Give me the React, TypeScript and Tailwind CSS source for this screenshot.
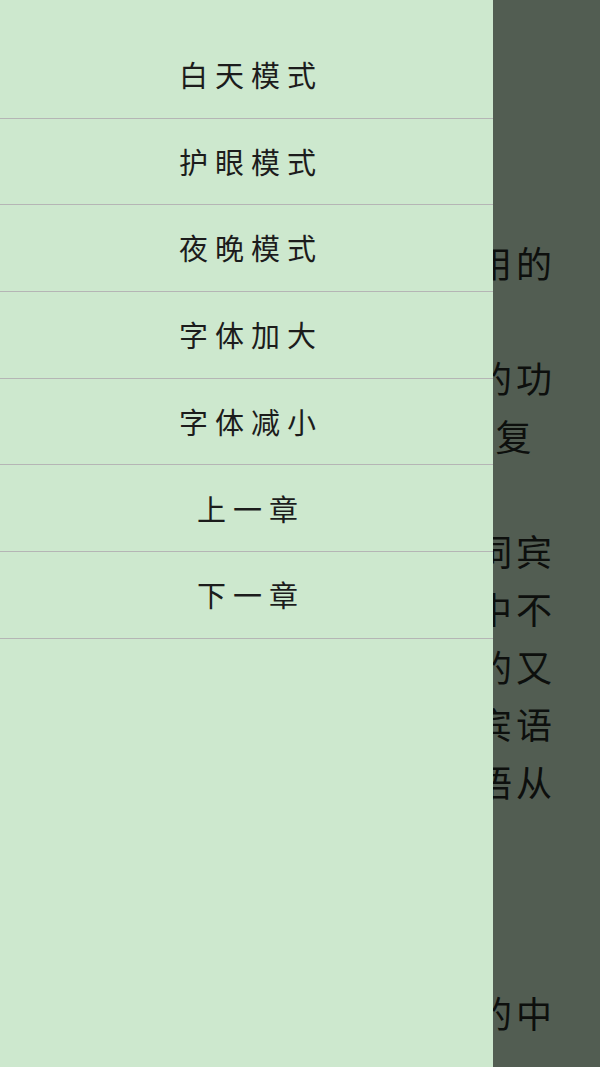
import React from 'react';

const menuItems = ['白天模式', '护眼模式', '夜晚模式', '字体加大', '字体减小', '上一章', '下一章'];

// 阅读页正文，每行 13 个字，左侧大部分被抽屉遮住
const pageLines: { text: string; wide?: boolean }[] = [
  { text: '' },
  { text: '第三节　宾语' },
  { text: '' },
  { text: '' },
  { text: '它是动词所支配或关涉作用的' },
  { text: '' },
  { text: '谓语动词的宾语具有不同的功' },
  { text: '能，主语和宾语可以相互重复', wide: true },
  { text: '' },
  { text: '一个句子里同时带两个动词宾' },
  { text: '语，指人叫间接宾语，其中不' },
  { text: '可省略，间接宾语在前面的又' },
  { text: '称为双宾语句，也叫作双宾语' },
  { text: '这种句子谓语动词后带宾语从' },
  { text: '' },
  { text: '' },
  { text: '' },
  { text: '宾语在实际运用中是句子的中' },
];

const App: React.FC = () => {
  return (
    <div
      className="relative w-[600px] h-[1067px] overflow-hidden bg-[#525d52]"
      style={{ fontFamily: '"Noto Sans CJK SC", "Noto Sans", sans-serif' }}
    >
      {/* 阅读页正文 */}
      <div className="pt-[3px] pl-[36px] text-[36px] leading-[57.7px] text-[#0d0f0d]">
        {pageLines.map((line, i) => (
          <div
            key={i}
            className={`whitespace-nowrap h-[57.7px] ${line.wide ? 'tracking-[2.3px]' : 'tracking-[4px]'}`}
          >
            {line.text || '\u00a0'}
          </div>
        ))}
      </div>

      {/* 抽屉菜单 */}
      <div className="absolute left-0 top-0 h-full w-[493px] bg-[#cde8ce] pt-[32px]">
        {menuItems.map((item) => (
          <div
            key={item}
            className="h-[86.7px] flex items-center justify-center border-b-[1.5px] border-[#b5b5b5] text-[29px] tracking-[7px] pl-[9px] text-[#1c1c1c]"
          >
            {item}
          </div>
        ))}
      </div>
    </div>
  );
};

export default App;
